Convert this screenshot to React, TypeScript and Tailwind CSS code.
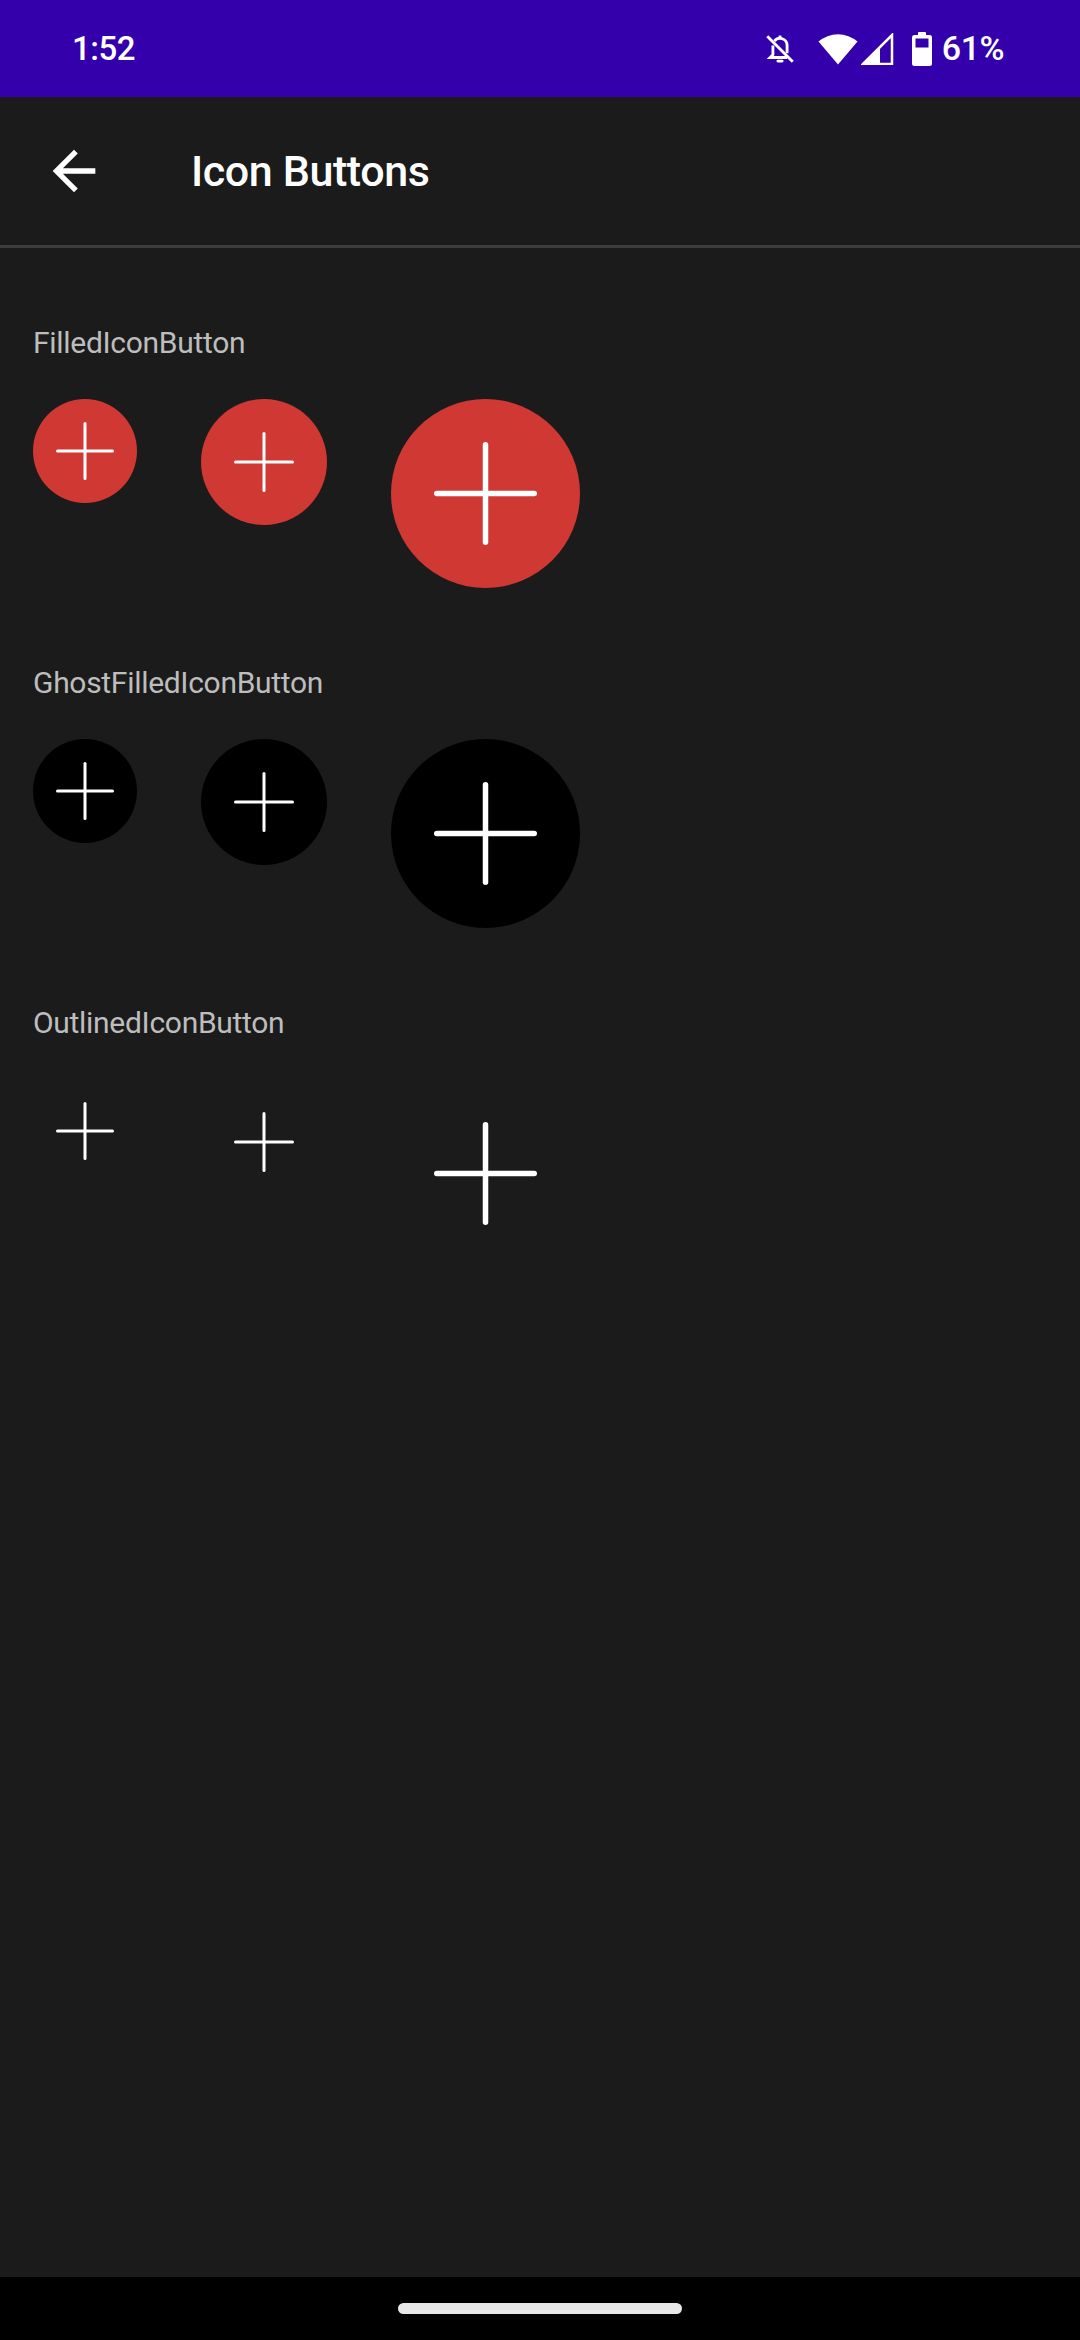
import React from 'react';

const font = { fontFamily: 'Roboto, "Noto Sans", sans-serif' };

// plus glyph drawn as two rounded strokes
const Plus = ({ size, stroke }: { size: number; stroke: number }) => {
  const h = stroke / 2;
  return (
    <svg width={size} height={size} viewBox={`0 0 ${size} ${size}`} fill="none">
      <line x1={h} y1={size / 2} x2={size - h} y2={size / 2} stroke="white" strokeWidth={stroke} strokeLinecap="round" />
      <line x1={size / 2} y1={h} x2={size / 2} y2={size - h} stroke="white" strokeWidth={stroke} strokeLinecap="round" />
    </svg>
  );
};

const sizes = [
  { box: 'w-[104px] h-[104px]', plus: 58, stroke: 3 },
  { box: 'w-[126px] h-[126px]', plus: 60, stroke: 3 },
  { box: 'w-[189px] h-[189px]', plus: 103, stroke: 5.5 },
];

const Section = ({ title, bg }: { title: string; bg: string }) => (
  <section className="flex flex-col">
    <div className="text-[30px] leading-[40px] text-[#bdbdbd] tracking-[-0.3px]" style={font}>
      {title}
    </div>
    <div className="mt-[36px] flex items-start gap-[64px]">
      {sizes.map((s, i) => (
        <button key={i} className={`${s.box} ${bg} rounded-full flex items-center justify-center shrink-0`}>
          <Plus size={s.plus} stroke={s.stroke} />
        </button>
      ))}
    </div>
  </section>
);

export default function App() {
  return (
    <div className="w-[1080px] h-[2340px] flex flex-col bg-[#1b1b1b]">
      {/* Status bar */}
      <div className="h-[97px] bg-[#3300ab] flex items-center pl-[72px] pr-[76px] text-white shrink-0">
        <span className="text-[33px] font-medium tracking-[-0.5px]" style={font}>1:52</span>
        <div className="ml-auto flex items-center">
          {/* bell off */}
          <svg width="34" height="34" viewBox="0 0 24 24" fill="none" stroke="white" strokeWidth="2">
            <path d="M8 6.5A5 5 0 0 1 17 9.5v5.5" />
            <path d="M7 9.5V16l-2 2h12" />
            <path d="M10.5 20.5h3" strokeLinecap="round" />
            <path d="M12 2.5v2" />
            <path d="M3 3l18 18" />
          </svg>
          {/* wifi */}
          <svg className="ml-[21px]" width="40" height="32" viewBox="0 0 40 32">
            <path d="M0.5 8.5 A30 30 0 0 1 39.5 8.5 L20 31.5 Z" fill="white" />
          </svg>
          {/* signal */}
          <svg className="ml-[3px]" width="33" height="32" viewBox="0 0 33 32">
            <path d="M2 31 L31 2 L31 31 Z" fill="none" stroke="white" strokeWidth="2.5" strokeLinejoin="miter" />
            <path d="M1 32 L19 14 L19 32 Z" fill="white" />
          </svg>
          {/* battery */}
          <svg className="ml-[18px]" width="20" height="34" viewBox="0 0 20 34">
            <rect x="6" y="0" width="8" height="4" rx="1" fill="white" />
            <rect x="0" y="3" width="20" height="31" rx="2.5" fill="white" />
            <rect x="3.5" y="6.5" width="13" height="9" fill="#3300ab" />
          </svg>
          <span className="ml-[10px] text-[34px] font-medium tracking-[-0.5px]" style={font}>61%</span>
        </div>
      </div>

      {/* App bar */}
      <div className="h-[148px] flex items-center pl-[42px] shrink-0">
        <svg width="64" height="64" viewBox="0 0 24 24" fill="white">
          <path d="M20 11H7.83l5.59-5.59L12 4l-8 8 8 8 1.41-1.41L7.83 13H20v-2z" />
        </svg>
        <h1 className="ml-[85px] text-[43px] font-medium text-white tracking-[-0.4px]" style={font}>
          Icon Buttons
        </h1>
      </div>
      <div className="h-[3px] bg-[#3a3d3f] shrink-0" />

      {/* Content */}
      <main className="flex-1 pl-[33px] pt-[75px] flex flex-col gap-[75px]">
        <Section title="FilledIconButton" bg="bg-[#d03834]" />
        <Section title="GhostFilledIconButton" bg="bg-black" />
        <Section title="OutlinedIconButton" bg="bg-transparent" />
      </main>

      {/* Nav bar */}
      <div className="h-[63px] bg-black flex items-center justify-center shrink-0">
        <div className="w-[284px] h-[11px] rounded-full bg-[#e8e8e8]" />
      </div>
    </div>
  );
}
